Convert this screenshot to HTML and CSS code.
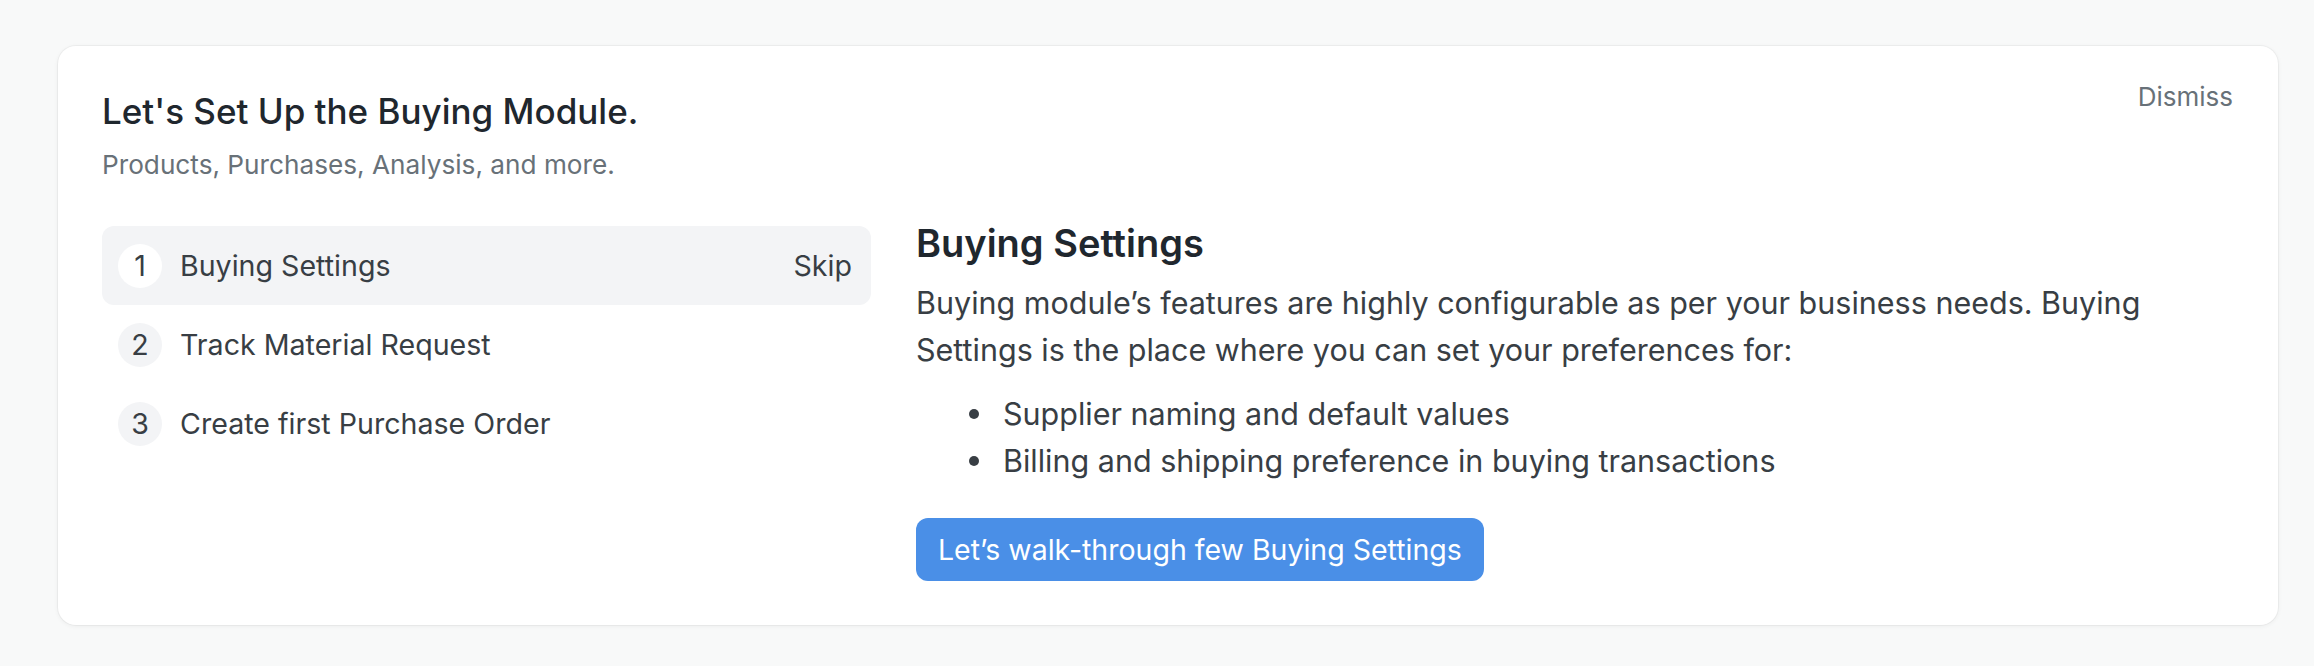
FILE: index.html
```html
<!DOCTYPE html>
<html lang="en">
<head>
<meta charset="utf-8">
<title>Onboarding</title>
<link rel="stylesheet" href="styles.css">
</head>
<body>
<div class="page">
  <section class="card">
    <header class="card-head">
      <div class="head-text">
        <h1 class="title">Let's Set Up the Buying Module.</h1>
        <p class="subtitle">Products, Purchases, Analysis, and more.</p>
      </div>
      <a class="dismiss">Dismiss</a>
    </header>
    <div class="card-body">
      <ol class="steps">
        <li class="step active">
          <span class="num">1</span>
          <span class="step-label">Buying Settings</span>
          <span class="skip">Skip</span>
        </li>
        <li class="step">
          <span class="num">2</span>
          <span class="step-label">Track Material Request</span>
        </li>
        <li class="step">
          <span class="num">3</span>
          <span class="step-label">Create first Purchase Order</span>
        </li>
      </ol>
      <div class="preview">
        <h2 class="preview-title">Buying Settings</h2>
        <p class="preview-text">Buying module’s features are highly configurable as per your business needs. Buying Settings is the place where you can set your preferences for:</p>
        <ul class="bullets">
          <li>Supplier naming and default values</li>
          <li>Billing and shipping preference in buying transactions</li>
        </ul>
        <button class="action">Let’s walk-through few Buying Settings</button>
      </div>
    </div>
  </section>
</div>
</body>
</html>
```

FILE: styles.css
```css
* { box-sizing: border-box; }
html, body {
  margin: 0;
  padding: 0;
  background: #f8f9f9;
  font-family: Inter, "Noto Sans", "Liberation Sans", sans-serif;
  color: #383e44;
}
.page {
  padding: 46px 36px 41px 58px;
}
.card {
  background: #ffffff;
  border-radius: 18px;
  box-shadow: 0 0 0 1px rgba(0, 0, 0, 0.035), 0 1px 5px rgba(0, 0, 0, 0.06);
  padding: 33px 45px 44px 44px;
}
.card-head {
  display: flex;
  justify-content: space-between;
  align-items: flex-start;
}
.title {
  margin: 11px 0 0 0;
  font-size: 35px;
  line-height: 42px;
  font-weight: 500;
  color: #1f272e;
}
.subtitle {
  margin: 15px 0 0 0;
  font-size: 26.2px;
  line-height: 36px;
  color: #687178;
}
.dismiss {
  font-size: 26px;
  line-height: 36px;
  color: #687178;
  cursor: pointer;
}
.card-body {
  display: grid;
  grid-template-columns: 769px 1fr;
  column-gap: 45px;
  margin-top: 43px;
  align-items: start;
}
.steps {
  list-style: none;
  margin: 0;
  padding: 0;
}
.step {
  display: flex;
  align-items: center;
  height: 79px;
  padding: 0 19px 0 16px;
  border-radius: 12px;
  font-size: 28.6px;
  color: #383e44;
}
.step.active {
  background: #f3f4f6;
}
.num {
  width: 44px;
  height: 44px;
  border-radius: 50%;
  background: #f3f4f6;
  display: flex;
  align-items: center;
  justify-content: center;
  font-size: 28.6px;
  color: #383e44;
  flex: none;
}
.step.active .num {
  background: #ffffff;
}
.step-label {
  margin-left: 18px;
  flex: 1;
}
.skip {
  color: #383e44;
  cursor: pointer;
}
.preview-title {
  margin: 0;
  font-size: 38px;
  line-height: 34px;
  font-weight: 600;
  color: #1f272e;
}
.preview-text {
  margin: 19px 0 0 0;
  font-size: 30.5px;
  line-height: 47px;
  color: #383e44;
}
.bullets {
  list-style: none;
  margin: 17px 0 0 0;
  padding: 0;
}
.bullets li {
  display: flex;
  align-items: center;
  font-size: 30.5px;
  line-height: 47px;
  color: #383e44;
}
.bullets li::before {
  content: "";
  width: 10px;
  height: 10px;
  border-radius: 50%;
  background: #383e44;
  margin: 0 24px 0 53px;
  flex: none;
}
.action {
  display: block;
  margin-top: 34px;
  height: 63px;
  padding: 0 22px;
  border: none;
  border-radius: 12px;
  background: #4a8fe7;
  color: #ffffff;
  font-family: inherit;
  font-size: 28.5px;
  cursor: pointer;
}
```
